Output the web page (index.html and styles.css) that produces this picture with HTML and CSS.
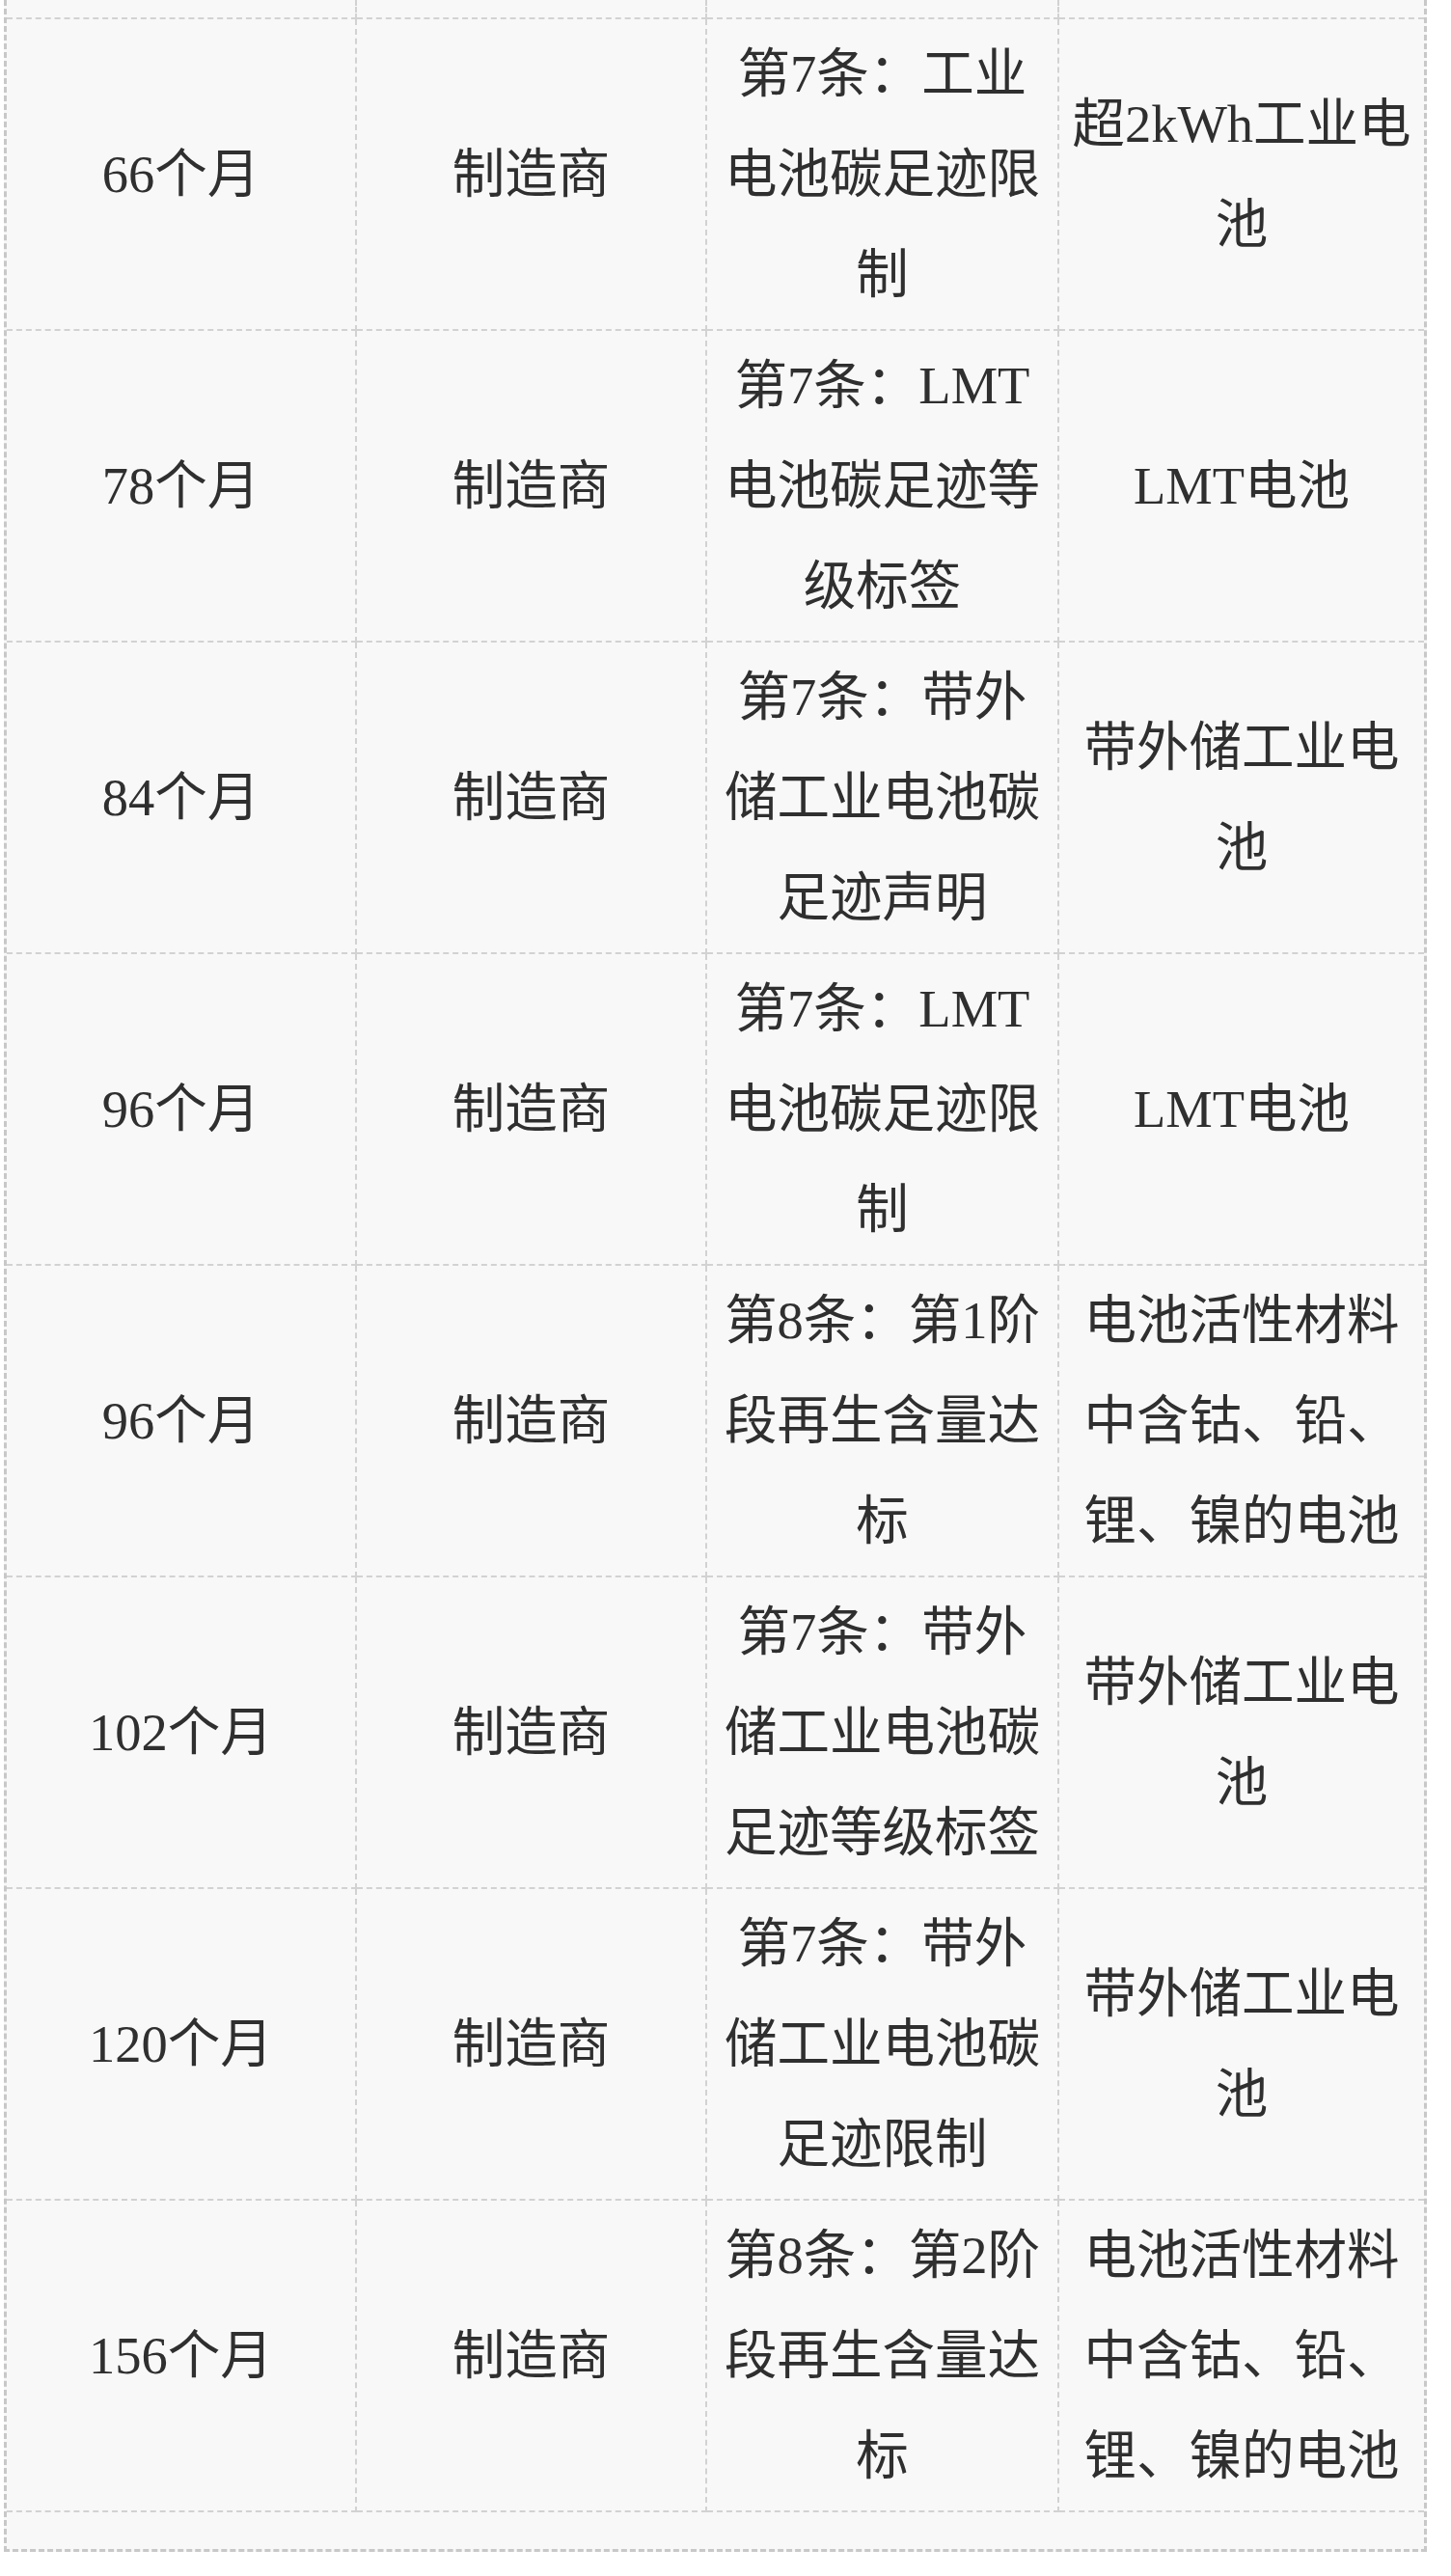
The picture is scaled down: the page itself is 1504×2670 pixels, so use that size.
FILE: index.html
```html
<!DOCTYPE html>
<html lang="zh-CN">
<head>
<meta charset="utf-8">
<title>电池法规时间表</title>
<link rel="stylesheet" href="styles.css">
</head>
<body>
<div class="wrap">
  <table class="grid">
    <colgroup>
      <col class="c1"><col class="c2"><col class="c3"><col class="c4">
    </colgroup>
    <tr class="spacer"><td></td><td></td><td></td><td></td></tr>
    <tr><td>66个月</td><td>制造商</td><td>第7条：工业电池碳足迹限制</td><td>超2kWh工业电池</td></tr>
    <tr><td>78个月</td><td>制造商</td><td>第7条：LMT电池碳足迹等级标签</td><td>LMT电池</td></tr>
    <tr><td>84个月</td><td>制造商</td><td>第7条：带外储工业电池碳足迹声明</td><td>带外储工业电池</td></tr>
    <tr><td>96个月</td><td>制造商</td><td>第7条：LMT电池碳足迹限制</td><td>LMT电池</td></tr>
    <tr><td>96个月</td><td>制造商</td><td>第8条：第1阶段再生含量达标</td><td>电池活性材料中含钴、铅、锂、镍的电池</td></tr>
    <tr><td>102个月</td><td>制造商</td><td>第7条：带外储工业电池碳足迹等级标签</td><td>带外储工业电池</td></tr>
    <tr><td>120个月</td><td>制造商</td><td>第7条：带外储工业电池碳足迹限制</td><td>带外储工业电池</td></tr>
    <tr><td>156个月</td><td>制造商</td><td>第8条：第2阶段再生含量达标</td><td>电池活性材料中含钴、铅、锂、镍的电池</td></tr>
  </table>
</div>
</body>
</html>
```
FILE: styles.css
```css
html, body {
  margin: 0;
  padding: 0;
  background: #ffffff;
}

body {
  font-family: "Liberation Serif", "Noto Sans CJK SC", serif;
  color: #2f2f2f;
}

.wrap {
  margin: 0 25px 0 4px;
  border: 3px dashed #c8c8c8;
  border-top: 0;
  background: #f8f8f8;
  padding-bottom: 38px;
}

.grid {
  width: 100%;
  border-collapse: collapse;
  table-layout: fixed;
}

.c1 { width: 362px; }
.c2 { width: 363px; }
.c3 { width: 365px; }

.grid td {
  border: 2px dashed #d2d2d2;
  padding: 4.5px 8px;
  text-align: center;
  vertical-align: middle;
  font-size: 54.5px;
  line-height: 104px;
  word-break: break-all;
}

.grid td:first-child { border-left: 0; }
.grid td:last-child { border-right: 0; }

.spacer td {
  height: 18px;
  padding: 0;
  border-top: 0;
  line-height: 0;
  font-size: 0;
}
```
